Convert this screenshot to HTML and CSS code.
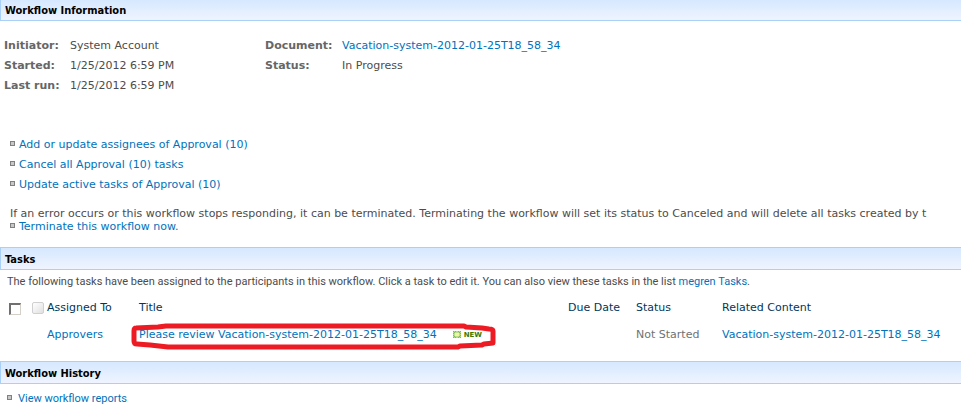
FILE: index.html
```
<!DOCTYPE html>
<html lang="en">
<head>
    <meta charset="UTF-8">
    <meta name="viewport" content="width=device-width, initial-scale=1.0">
    <title>Workflow Status</title>
    <link rel="stylesheet" href="styles.css">
</head>
<body>
    <section>
        <h2 class="bar bar-top">Workflow Information</h2>
        <div class="info">
            <dl class="info-list">
                <dt>Initiator:</dt>
                <dd>System Account</dd>
                <dt>Started:</dt>
                <dd>1/25/2012 6:59 PM</dd>
                <dt>Last run:</dt>
                <dd>1/25/2012 6:59 PM</dd>
            </dl>
            <dl class="info-list info-document">
                <dt>Document:</dt>
                <dd><a href="#">Vacation-system-2012-01-25T18_58_34</a></dd>
                <dt>Status:</dt>
                <dd>In Progress</dd>
            </dl>
        </div>
        <ul class="actions">
            <li><a href="#">Add or update assignees of Approval (10)</a></li>
            <li><a href="#">Cancel all Approval (10) tasks</a></li>
            <li><a href="#">Update active tasks of Approval (10)</a></li>
        </ul>
        <p class="terminate-note">If an error occurs or this workflow stops responding, it can be terminated. Terminating the workflow will set its status to Canceled and will delete all tasks created by t</p>
        <ul class="actions terminate">
            <li><a href="#">Terminate this workflow now.</a></li>
        </ul>
    </section>

    <section>
        <h2 class="bar">Tasks</h2>
        <p class="description">The following tasks have been assigned to the participants in this workflow. Click a task to edit it. You can also view these tasks in the list <a href="#">megren Tasks</a>.</p>
        <table class="tasks">
            <colgroup>
                <col class="col-check">
                <col class="col-icon">
                <col class="col-assigned">
                <col class="col-title">
                <col class="col-due">
                <col class="col-status">
                <col class="col-related">
            </colgroup>
            <thead>
                <tr>
                    <th><input type="checkbox" class="select-all" aria-label="Select all tasks"></th>
                    <th><span class="type-icon"></span></th>
                    <th>Assigned To</th>
                    <th>Title</th>
                    <th>Due Date</th>
                    <th>Status</th>
                    <th>Related Content</th>
                </tr>
            </thead>
            <tbody>
                <tr>
                    <td></td>
                    <td></td>
                    <td><a href="#">Approvers</a></td>
                    <td>
                        <div class="task-title">
                            <a href="#">Please review Vacation-system-2012-01-25T18_58_34</a>
                            <span class="new-badge">
                                <svg width="8" height="7" viewBox="0 0 8 7" shape-rendering="crispEdges">
                                    <path fill="#b5dd8a" d="M0 0h8v7h-8z"/>
                                    <path fill="#7dbb4c" d="M0 0h1v1h-1zM2 0h1v1h-1zM5 0h1v1h-1zM7 0h1v1h-1zM1 1h1v1h-1zM6 1h1v1h-1zM0 2h1v1h-1zM7 2h1v1h-1zM0 4h1v1h-1zM7 4h1v1h-1zM1 5h1v1h-1zM6 5h1v1h-1zM0 6h1v1h-1zM2 6h1v1h-1zM5 6h1v1h-1zM7 6h1v1h-1z"/>
                                    <path fill="#f2f3a0" d="M2 2h4v3h-4z"/>
                                </svg>
                                <b>NEW</b>
                            </span>
                            <svg class="highlight" width="368" height="28" viewBox="0 0 368 28" aria-hidden="true">
                                <path d="M36 3L28 4L6 5Q4 5 4 8L4 18Q4 21 7 21L20 22L38 24L328 24L330 23L352 22L354 21L363 20L363 8Q363 6 359 6L352 5L336 4L334 3Z"/>
                            </svg>
                        </div>
                    </td>
                    <td></td>
                    <td class="status">Not Started</td>
                    <td><a href="#">Vacation-system-2012-01-25T18_58_34</a></td>
                </tr>
            </tbody>
        </table>
    </section>

    <section>
        <h2 class="bar">Workflow History</h2>
        <ul class="actions history">
            <li><a href="#">View workflow reports</a></li>
        </ul>
    </section>
</body>
</html>
```
FILE: styles.css
```
*,
*::before {
    box-sizing: border-box;
}

body {
    margin: 0;
    background-color: #fff;
    color: #4c4c4c;
    font-family: Verdana, "DejaVu Sans", sans-serif;
    font-size: 11px;
    line-height: 20px;
    overflow-x: hidden;
}

a {
    color: #0072bc;
    text-decoration: none;
}

a:hover {
    text-decoration: underline;
}

ul, dl, p {
    margin: 0;
    padding: 0;
}

/* Section bars */
.bar {
    margin: 0;
    padding: 0 4px;
    height: 23px;
    border: 1px solid #a9d1f7;
    border-right: none;
    background: linear-gradient(#d6e8ff, #eff4ff);
    color: #000;
    font-family: Tahoma, "DejaVu Sans Condensed", "DejaVu Sans", sans-serif;
    font-size: 11px;
    font-weight: bold;
    line-height: 23px;
}

.bar-top {
    height: 21px;
    border-top: none;
    line-height: 21px;
}

/* Workflow information */
.info {
    display: flex;
    padding: 15px 4px 0;
}

.info-list {
    display: grid;
    grid-template-columns: 66px 195px;
    grid-auto-rows: 20px;
}

.info-document {
    grid-template-columns: 77px auto;
}

.info-list dt {
    color: #666;
    font-weight: bold;
}

.info-list dd {
    margin: 0;
    white-space: nowrap;
}

.actions {
    padding-left: 10px;
    margin-top: 39px;
    list-style: none;
}

.actions li {
    display: flex;
    align-items: center;
    gap: 4px;
}

.actions li::before {
    content: "";
    width: 5px;
    height: 5px;
    margin-bottom: 3px;
    border: 1px solid #808080;
    background-color: #c8c8c8;
}

.terminate-note {
    margin-top: 12px;
    padding-left: 10px;
    line-height: 13px;
    white-space: nowrap;
}

.terminate {
    margin: 0 0 14px;
    line-height: 13px;
}

/* Tasks */
.description {
    padding: 2px 7px 0;
    font-family: Tahoma, Roboto, sans-serif;
    font-size: 11px;
}

.tasks {
    width: 100%;
    border-collapse: collapse;
    table-layout: fixed;
    margin: 2px 0 13px;
}

.tasks th,
.tasks td {
    padding: 0;
    height: 27px;
    text-align: left;
    vertical-align: middle;
    white-space: nowrap;
}

.tasks th {
    color: #003759;
    font-weight: normal;
}

.col-check {
    width: 32px;
}

.col-icon {
    width: 15px;
}

.col-assigned {
    width: 92px;
}

.col-due {
    width: 68px;
}

.col-status {
    width: 86px;
}

.col-related {
    width: 239px;
}

.select-all {
    appearance: none;
    display: block;
    width: 12px;
    height: 12px;
    margin: 2px 0 0 9px;
    border: 1px solid #d4d0c8;
    border-top: 2px solid #707070;
    border-left: 2px solid #707070;
    background-color: #fff;
}

.type-icon {
    display: block;
    width: 12px;
    height: 12px;
    border: 1px solid #d0d0d0;
    border-radius: 2px;
    background: linear-gradient(135deg, #fff, #e0e0e0);
}

.status {
    color: #717171;
}

.task-title {
    display: flex;
    align-items: center;
    gap: 16px;
    position: relative;
}

.new-badge {
    display: flex;
    align-items: center;
    gap: 3px;
    color: #3c7a00;
    font-size: 7px;
    line-height: 8px;
}

/* Hand-drawn ring around the task title */
.highlight {
    position: absolute;
    left: -9px;
    top: -2px;
    pointer-events: none;
}

.highlight path {
    fill: none;
    stroke: #ed1c24;
    stroke-width: 5;
    stroke-linejoin: round;
}

/* Workflow history */
.history {
    margin-top: 5px;
    padding-left: 7px;
    font-family: Tahoma, Roboto, sans-serif;
}

.history li {
    gap: 6px;
}
```
